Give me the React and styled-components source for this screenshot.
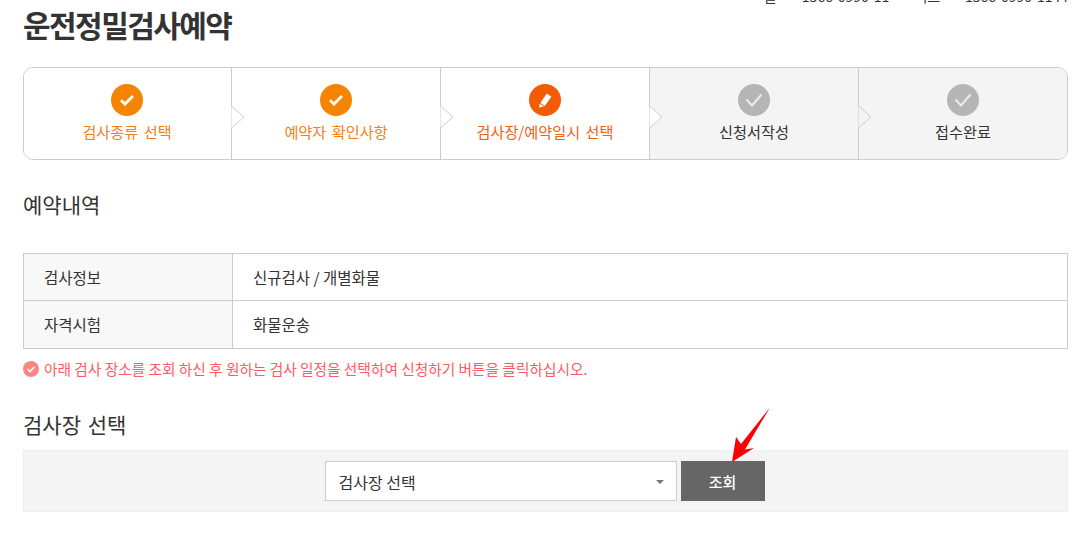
import React from "react";
import styled, { createGlobalStyle } from "styled-components";

const Global = createGlobalStyle`
  html, body { margin: 0; padding: 0; background: #fff; }
  body { width: 1086px; height: 542px; overflow: hidden; font-family: "Noto Sans CJK KR", "Liberation Sans", sans-serif; color: #333; }
`;

const Page = styled.div`
  position: relative;
  box-sizing: border-box;
  width: 1086px;
  height: 542px;
  padding: 0 18px 0 23px;
  overflow: hidden;
`;
const TopContact = styled.div`
  position: absolute;
  right: 18px;
  top: -12px;
  display: flex;
  gap: 25px;
  font-size: 14px;
  line-height: 16px;
  color: #333;
  white-space: nowrap;
`;
const Title = styled.h1`
  margin: 0;
  padding-top: 5px;
  height: 67px;
  box-sizing: border-box;
  font-size: 30px;
  line-height: 38px;
  font-weight: 700;
  letter-spacing: -1.55px;
  color: #333;
`;
const Steps = styled.ol`
  display: grid;
  grid-template-columns: 207px 209px 209px 209px 1fr;
  list-style: none;
  margin: 0;
  padding: 0;
  height: 93px;
  box-sizing: border-box;
  border: 1px solid #ccc;
  border-radius: 10px;
  overflow: hidden;
`;
const Step = styled.li`
  position: relative;
  display: flex;
  flex-direction: column;
  align-items: center;
  padding: 16px ${p => (p.$first ? "1px" : "0")} 0 0;
  box-sizing: border-box;
  background: ${p => (p.$off ? "#f4f4f4" : "#fff")};
  border-left: ${p => (p.$first ? "0" : "1px solid #ccc")};
`;
const Badge = styled.span`
  display: flex;
  align-items: center;
  justify-content: center;
  width: 32px;
  height: 32px;
  border-radius: 50%;
  background: ${p => p.$bg};
`;
const StepLabel = styled.span`
  margin-top: 5px;
  font-size: 15.2px;
  line-height: 20px;
  word-spacing: 2px;
  color: ${p => p.$color};
`;
const Chevron = styled.svg`
  position: absolute;
  left: -1px;
  top: 38px;
  width: 14px;
  height: 22px;
`;
const SectionTitle = styled.h2`
  margin: 0;
  font-size: 21px;
  line-height: 28px;
  font-weight: 400;
  word-spacing: 2px;
  color: #333;
`;
const BookingHead = styled(SectionTitle)`
  padding-top: 30px;
  height: 93px;
  box-sizing: border-box;
`;
const InfoTable = styled.div`
  display: grid;
  grid-template-columns: 209px 1fr;
  grid-template-rows: 47px 48px;
  border: 1px solid #ccc;
  border-bottom: 0;
`;
const Th = styled.div`
  box-sizing: border-box;
  border-bottom: 1px solid #ccc;
  border-right: 1px solid #ccc;
  background: #f8f8f8;
  padding-left: 20px;
  font-size: 15.5px;
  line-height: 47px;
  color: #333;
`;
const Td = styled.div`
  box-sizing: border-box;
  border-bottom: 1px solid #ccc;
  padding-left: 20px;
  font-size: 15.5px;
  line-height: 47px;
  color: #333;
`;
const Notice = styled.p`
  display: flex;
  align-items: center;
  gap: 5px;
  margin: 0;
  height: 39px;
  font-size: 14.7px;
  color: #ff5a63;
`;
const SearchHead = styled(SectionTitle)`
  padding-top: 22px;
  height: 62px;
  box-sizing: border-box;
`;
const SearchBar = styled.div`
  position: relative;
  display: flex;
  justify-content: center;
  gap: 4px;
  height: 62px;
  box-sizing: border-box;
  padding: 10px 2px 0 0;
  background: #f4f4f4;
  border: 1px solid #eee;
`;
const SelectBox = styled.div`
  position: relative;
  width: 352px;
  height: 40px;
  box-sizing: border-box;
  border: 1px solid #ccc;
  background: #fff;
  padding-left: 13px;
  font-size: 16px;
  line-height: 40px;
  color: #333;
`;
const Caret = styled.span`
  position: absolute;
  right: 12px;
  top: 18px;
  border-left: 4px solid transparent;
  border-right: 4px solid transparent;
  border-top: 4px solid #777;
`;
const SearchButton = styled.button`
  width: 84px;
  height: 40px;
  border: 0;
  padding: 0;
  background: #666;
  color: #fff;
  font-family: inherit;
  font-size: 15px;
  font-weight: 500;
`;
const Arrow = styled.svg`
  position: absolute;
  left: 705px;
  top: -44px;
  width: 44px;
  height: 56px;
`;

const Check = () => (
  <svg width="18" height="18" viewBox="0 0 18 18" fill="none">
    <path d="M3 9.2l4 3.8 8-8" stroke="#fff" strokeWidth="2.8" />
  </svg>
);
const SoftCheck = () => (
  <svg width="22" height="22" viewBox="0 0 22 22" fill="none">
    <path d="M3.5 10.5l5.5 6 9.5-11" stroke="#ececec" strokeWidth="2" />
  </svg>
);
const Pencil = () => (
  <svg width="16" height="16" viewBox="0 0 16 16">
    <path d="M9.8 1.6l4.6 3.2-6.6 9.2-4.5-2.9z" fill="#fff" />
    <path d="M2.8 11.7l4.1 2.7-4.9 1z" fill="#fff" />
  </svg>
);
const Notch = ({ fill }) => (
  <Chevron viewBox="0 0 14 22" aria-hidden="true">
    <path d="M.5 0l12.5 11L.5 22" fill={fill} stroke="#ccc" />
  </Chevron>
);

const stepData = [
  { label: "검사종류 선택", bg: "#f58400", color: "#f57f10", icon: <Check /> },
  { label: "예약자 확인사항", bg: "#f58400", color: "#f57f10", icon: <Check /> },
  { label: "검사장/예약일시 선택", bg: "#f25c05", color: "#f2600f", icon: <Pencil /> },
  { label: "신청서작성", bg: "#b5b5b5", color: "#333", icon: <SoftCheck />, off: true },
  { label: "접수완료", bg: "#b5b5b5", color: "#333", icon: <SoftCheck />, off: true },
];

export default function App() {
  return (
    <Page>
      <Global />
      <TopContact>
        <span>콜</span>
        <span>1566-0990-11</span>
        <span>팩스</span>
        <span>1566-0990-1144</span>
      </TopContact>
      <Title>운전정밀검사예약</Title>
      <Steps>
        {stepData.map((s, i) => (
          <Step key={s.label} $first={i === 0} $off={s.off}>
            {i > 0 && <Notch fill={stepData[i - 1].off ? "#f4f4f4" : "#fff"} />}
            <Badge $bg={s.bg}>{s.icon}</Badge>
            <StepLabel $color={s.color}>{s.label}</StepLabel>
          </Step>
        ))}
      </Steps>
      <BookingHead>예약내역</BookingHead>
      <InfoTable>
        <Th>검사정보</Th>
        <Td>신규검사 / 개별화물</Td>
        <Th>자격시험</Th>
        <Td>화물운송</Td>
      </InfoTable>
      <Notice>
        <svg width="16" height="16" viewBox="0 0 16 16" fill="none">
          <circle cx="8" cy="8" r="8" fill="#ff8585" />
          <path d="M4.5 8.2l2.5 2.4 4.4-4.8" stroke="#fff" strokeWidth="1.6" />
        </svg>
        아래 검사 장소를 조회 하신 후 원하는 검사 일정을 선택하여 신청하기 버튼을 클릭하십시오.
      </Notice>
      <SearchHead>검사장 선택</SearchHead>
      <SearchBar>
        <SelectBox>
          검사장 선택
          <Caret />
        </SelectBox>
        <SearchButton>조회</SearchButton>
        <Arrow viewBox="0 0 44 56" aria-hidden="true">
          <path d="M41 .5L12 37 7 30 3 55 25 41 16 42.5z" fill="#f00" />
        </Arrow>
      </SearchBar>
    </Page>
  );
}
